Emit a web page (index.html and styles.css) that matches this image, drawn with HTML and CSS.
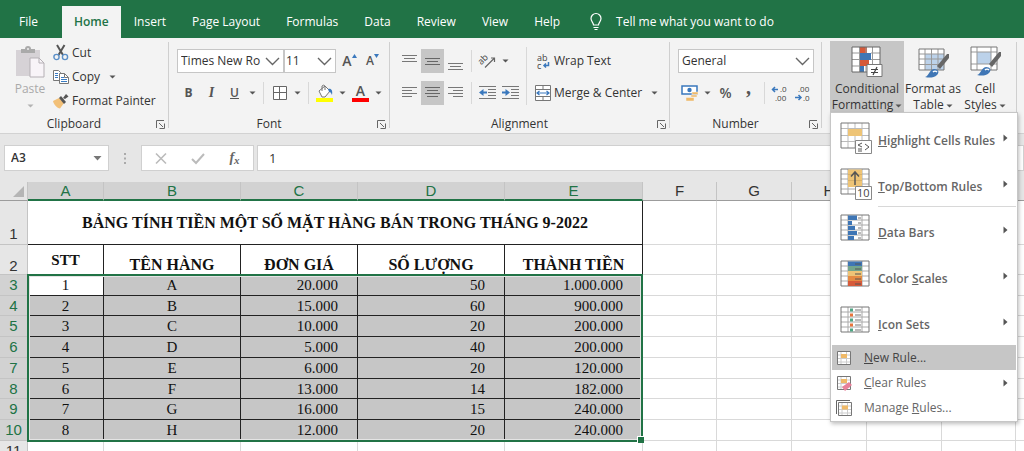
FILE: index.html
```html
<!DOCTYPE html>
<html lang="vi">
<head>
<meta charset="utf-8">
<title>Excel</title>
<link rel="stylesheet" href="styles.css">
</head>
<body>
<svg class="defs" aria-hidden="true">
  <symbol id="tri" viewBox="0 0 7 4"><path d="M0.5 0.500h6L3.500 3.500z" fill="#555"/></symbol>
  <symbol id="chev" viewBox="0 0 15 9"><path d="M1 1l6.500 6.500L14 1" fill="none" stroke="#666" stroke-width="1.400"/></symbol>
  <symbol id="launch" viewBox="0 0 9 9"><path d="M0.500 8V0.500H8M3 3l4 4M8.500 3.500v5h-5" fill="none" stroke="#666"/></symbol>
  <symbol id="sub" viewBox="0 0 5 8"><path d="M0.500 0.500v7L4.500 4z" fill="#555"/></symbol>
  <symbol id="grid" viewBox="0 0 30 30"><path d="M1 1h28v25H1z" fill="#fff"/><path d="M1 6h28M1 11h28M1 16h28M1 21h28M8 1v25M22 1v25" stroke="#aaa"/><path d="M1 1h28v25H1z" fill="none" stroke="#777"/></symbol>
</svg>

<nav class="tabs">
  <button class="tab tab-file">File</button>
  <button class="tab active">Home</button>
  <button class="tab">Insert</button>
  <button class="tab">Page Layout</button>
  <button class="tab">Formulas</button>
  <button class="tab">Data</button>
  <button class="tab">Review</button>
  <button class="tab">View</button>
  <button class="tab">Help</button>
  <button class="tab tell">
    <svg width="12" height="18" viewBox="0 0 12 18"><path d="M3.500 12C3.500 9.500 1 8.500 1 5.500a5 5 0 0 1 10 0c0 3-2.500 4-2.500 6.500zM3.500 14.500h5M4.500 16.500h3" fill="none" stroke="#fff" stroke-width="1.200"/></svg>
    Tell me what you want to do</button>
</nav>

<div class="ribbon">
  <section class="group clipboard">
    <div class="body">
      <button class="paste" disabled>
        <svg width="31" height="32" viewBox="0 0 31 32"><path d="M1 4h24v26H1z" fill="#d6d2d6"/><path d="M6 7V3h4a3 3 0 0 1 6 0h4v4z" fill="#aaa"/><circle cx="13" cy="3" r="1" fill="#eee"/><path d="M15 12h9l5 5v14H15z" fill="#f8f4f8" stroke="#b5b0b5"/><path d="M24 12v5h5" fill="none" stroke="#b5b0b5"/></svg>
        <span>Paste</span>
        <svg width="7" height="4" class="faint"><use href="#tri"/></svg>
      </button>
      <div class="clip-list">
        <button class="cmd"><svg width="16" height="16" viewBox="0 0 16 16"><path d="M4 0l6 10M11.500 0l-6 10" stroke="#555" stroke-width="2" fill="none"/><circle cx="3.500" cy="12" r="2.600" fill="none" stroke="#5b8fc7" stroke-width="1.400"/><circle cx="12" cy="12" r="2.600" fill="none" stroke="#5b8fc7" stroke-width="1.400"/></svg>Cut</button>
        <button class="cmd"><svg width="16" height="16" viewBox="0 0 16 16"><path d="M0.500 1.500h5l2 2v8h-7z" fill="#fff" stroke="#777"/><path d="M2 4.500h3M2 6.500h3M2 8.500h3" stroke="#3a7cc3"/><path d="M6.500 4.500h5l4 4v6h-9z" fill="#fff" stroke="#777"/><path d="M11.500 4.500v4h4" fill="none" stroke="#777"/><path d="M8 8.500h3M8 10.500h6M8 12.500h6" stroke="#3a7cc3"/></svg>Copy<svg class="after" width="7" height="4"><use href="#tri"/></svg></button>
        <button class="cmd"><svg width="16" height="16" viewBox="0 0 16 16"><path d="M0 8l6-3 5 5-4 5.500C4 15 1 12 0 8z" fill="#f2c078"/><path d="M6 5l2-2 5 6-2 2z" fill="#555"/><path d="M10 5l3-4 2.500 2.500L12 6z" fill="#555"/></svg>Format Painter</button>
      </div>
    </div>
    <footer><span>Clipboard</span><button class="launch" aria-label="Clipboard options"><svg width="9" height="9"><use href="#launch"/></svg></button></footer>
  </section>

  <section class="group font">
    <div class="body rows">
      <div class="row">
        <label class="combo combo-font"><select aria-label="Font"><option>Times New Ro</option></select><svg width="15" height="9"><use href="#chev"/></svg></label>
        <label class="combo combo-size"><select aria-label="Font size"><option>11</option></select><svg width="15" height="9"><use href="#chev"/></svg></label>
        <button class="tool grow" aria-label="Increase font size"><span class="glyph-a">A</span><svg width="5" height="4" viewBox="0 0 5 4"><path d="M0 4L2.500 0 5 4z" fill="#3a78bd"/></svg></button>
        <button class="tool grow" aria-label="Decrease font size"><span class="glyph-a small">A</span><svg width="5" height="4" viewBox="0 0 5 4"><path d="M0 0l2.500 4L5 0z" fill="#3a78bd"/></svg></button>
      </div>
      <div class="row">
        <button class="tool"><b>B</b></button>
        <button class="tool"><i>I</i></button>
        <button class="tool"><u>U</u></button>
        <button class="arrow" aria-label="Underline styles"><svg width="7" height="4"><use href="#tri"/></svg></button>
        <span class="sep"></span>
        <button class="tool" aria-label="Borders"><svg width="14" height="14" viewBox="0 0 14 14"><path d="M0.500 0.500h13v13H0.500zM6.500 0v14M0 6.500h14" fill="#fff" stroke="#666"/></svg></button>
        <button class="arrow" aria-label="Border styles"><svg width="7" height="4"><use href="#tri"/></svg></button>
        <span class="sep"></span>
        <button class="tool" aria-label="Fill color"><svg width="17" height="18" viewBox="0 0 17 18"><path d="M3 7l6-5 5 5-5 6H6z" fill="#fff" stroke="#777"/><path d="M6 7V2a2 2 0 0 1 3 0v4" fill="none" stroke="#777"/><path d="M12 5c3-1 5 1 4 6-1-2-1-3-3-3z" fill="#3a78bd"/><path d="M0 14h17v4H0z" fill="#ff0"/></svg></button>
        <button class="arrow" aria-label="Fill colors"><svg width="7" height="4"><use href="#tri"/></svg></button>
        <button class="tool fontcolor">A</button>
        <button class="arrow" aria-label="Font colors"><svg width="7" height="4"><use href="#tri"/></svg></button>
      </div>
    </div>
    <footer><span>Font</span><button class="launch" aria-label="Font options"><svg width="9" height="9"><use href="#launch"/></svg></button></footer>
  </section>

  <section class="group alignment">
    <div class="body">
      <div class="rows">
        <div class="row">
          <button class="tool" aria-label="Top align"><svg width="15" height="20" viewBox="0 0 15 20"><path d="M0 4.500h15M2 7.500h11M0 10.500h15" stroke="#777"/></svg></button>
          <button class="tool on" aria-label="Middle align"><svg width="15" height="20" viewBox="0 0 15 20"><path d="M0 7.500h15M2 10.500h11M0 13.500h15" stroke="#666"/></svg></button>
          <button class="tool" aria-label="Bottom align"><svg width="15" height="20" viewBox="0 0 15 20"><path d="M0 12.500h15M2 15.500h11M0 18.500h15" stroke="#777"/></svg></button>
          <span class="sep"></span>
          <button class="tool" aria-label="Orientation"><svg width="17" height="16" viewBox="0 0 17 16"><text x="0" y="9" class="ab" transform="rotate(-45 5 8)">ab</text><path d="M6 14.500L15 5.500M15.500 9V5H12" fill="none" stroke="#666" stroke-width="1.200"/></svg></button>
          <button class="arrow" aria-label="Orientations"><svg width="7" height="4"><use href="#tri"/></svg></button>
        </div>
        <div class="row">
          <button class="tool" aria-label="Align left"><svg width="15" height="12" viewBox="0 0 15 12"><path d="M0 .5h15M0 3.500h10M0 6.500h15M0 9.500h10" stroke="#777"/></svg></button>
          <button class="tool on" aria-label="Center"><svg width="15" height="12" viewBox="0 0 15 12"><path d="M0 .5h15M2 3.500h11M0 6.500h15M2 9.500h11" stroke="#666"/></svg></button>
          <button class="tool" aria-label="Align right"><svg width="15" height="12" viewBox="0 0 15 12"><path d="M0 .5h15M5 3.500h10M0 6.500h15M5 9.500h10" stroke="#777"/></svg></button>
          <span class="sep"></span>
          <button class="tool" aria-label="Decrease indent"><svg width="17" height="14" viewBox="0 0 17 14"><path d="M0 .5h17M9 3.500h8M9 6.500h8M9 9.500h8M0 12.500h17" stroke="#777"/><path d="M0 6.500L4.500 3v2.500H8v2H4.500V10z" fill="#3a78bd"/></svg></button>
          <button class="tool" aria-label="Increase indent"><svg width="17" height="14" viewBox="0 0 17 14"><path d="M0 .5h17M9 3.500h8M9 6.500h8M9 9.500h8M0 12.500h17" stroke="#777"/><path d="M8 6.500L3.500 3v2.500H0v2h3.500V10z" fill="#3a78bd"/></svg></button>
        </div>
      </div>
      <span class="sep tall"></span>
      <div class="rows">
        <button class="cmd wide"><svg width="16" height="17" viewBox="0 0 16 17"><text x="2" y="8" class="ab">ab</text><text x="2" y="16" class="ab">c</text><path d="M13.500 9v3.500H9.500M11 10.500l-2 2 2 2" fill="none" stroke="#3a78bd" stroke-width="1.500"/></svg>Wrap Text</button>
        <button class="cmd wide"><svg width="16" height="16" viewBox="0 0 16 16"><path d="M.5 .5h15v15H.5zM0 4.500h16M0 11.500h16M8 0v4M8 12v4" fill="#fff" stroke="#777"/><path d="M2 8h12M4.500 6L2 8l2.500 2M11.500 6L14 8l-2.500 2" fill="none" stroke="#3a78bd" stroke-width="1.200"/></svg>Merge &amp; Center<svg class="after" width="7" height="4"><use href="#tri"/></svg></button>
      </div>
    </div>
    <footer><span>Alignment</span><button class="launch" aria-label="Alignment options"><svg width="9" height="9"><use href="#launch"/></svg></button></footer>
  </section>

  <section class="group number">
    <div class="body rows">
      <div class="row">
        <label class="combo combo-num"><select aria-label="Number format"><option>General</option></select><svg width="15" height="9"><use href="#chev"/></svg></label>
      </div>
      <div class="row">
        <button class="tool" aria-label="Accounting format"><svg width="18" height="17" viewBox="0 0 18 17"><path d="M1 1h15v8H1z" fill="#fff" stroke="#3a78bd" stroke-width="1.500"/><circle cx="8.500" cy="5" r="2.200" fill="#3a78bd"/><path d="M11 7h6v2.500h-6zM10 10h6v2h-6zM5 12.500h8V16H5z" fill="#efb968" stroke="#f3f3f3" stroke-width=".5"/></svg></button>
        <button class="arrow" aria-label="Accounting formats"><svg width="7" height="4"><use href="#tri"/></svg></button>
        <button class="tool pct">%</button>
        <button class="tool comma">,</button>
        <span class="sep"></span>
        <button class="tool" aria-label="Increase decimal"><svg width="17" height="16" viewBox="0 0 17 16"><path d="M0 4.500h6M3 2L.5 4.500 3 7" fill="none" stroke="#3a78bd" stroke-width="1.500"/><text x="8" y="7" class="dec">.0</text><text x="3" y="16" class="dec">.00</text></svg></button>
        <button class="tool" aria-label="Decrease decimal"><svg width="17" height="16" viewBox="0 0 17 16"><text x="3" y="7" class="dec">.00</text><path d="M0 12.500h6M3.500 10L6 12.500 3.500 15" fill="none" stroke="#3a78bd" stroke-width="1.500"/><text x="8" y="16" class="dec">.0</text></svg></button>
      </div>
    </div>
    <footer><span>Number</span><button class="launch" aria-label="Number options"><svg width="9" height="9"><use href="#launch"/></svg></button></footer>
  </section>

  <section class="group styles">
    <div class="cf">
      <button class="big on">
        <svg width="33" height="32" viewBox="0 0 33 32"><path d="M1 1h28v25H1z" fill="#fff"/><path d="M9 1h7v6H9zM9 14h9v6H9z" fill="#d65a3a"/><path d="M9 7h11v7H9zM9 20h4v6H9z" fill="#3f76b5"/><path d="M1 7h8M20 7h9M1 13.500h8M20 13.500h9M1 20h8M18 20h11M8.500 1v25M21.500 1v25M15 1v6M15 20v6" stroke="#999"/><path d="M1 1h28v25H1z" fill="none" stroke="#666"/><path d="M16 18.500h15v12H16z" fill="#fff" stroke="#777"/><path d="M20 23.500h7M20 26.500h7M26 21l-4 8" stroke="#444" stroke-width="1.200"/></svg>
        <span>Conditional<br>Formatting<svg width="7" height="4"><use href="#tri"/></svg></span>
      </button>
      <div class="menu" role="menu">
        <button class="item large" role="menuitem"><svg width="32" height="32" viewBox="0 0 32 32"><path d="M1 1h28v25H1z" fill="#fff"/><path d="M1 6.500h28M1 13.500h28M1 19.500h28M8 1v25M15 1v25M22 1v25" stroke="#bbb"/><path d="M1 1h28v25H1z" fill="none" stroke="#777"/><path d="M8 7h14v7H8z" fill="#eec476"/><path d="M15.500 18.500h16v13h-16z" fill="#fff" stroke="#888"/><path d="M22 21l-4 2 4 2M18 27h4M18 29h4M25 22l4 3-4 3" fill="none" stroke="#555"/></svg><span><u>H</u>ighlight Cells Rules</span><svg class="sub" width="5" height="8"><use href="#sub"/></svg></button>
        <button class="item large" role="menuitem"><svg width="32" height="32" viewBox="0 0 32 32"><use href="#grid" width="30" height="30"/><path d="M8 1.500h14V19H8z" fill="#eec476"/><path d="M8 6.500h14M8 12.500h14" stroke="#d8b26a"/><path d="M15 17V5M11 8.500L15 4l4 4.500" fill="none" stroke="#555" stroke-width="1.500"/><path d="M15.500 18.500h16v13h-16z" fill="#fff" stroke="#888"/><text x="17" y="29" class="ten">10</text></svg><span><u>T</u>op/Bottom Rules</span><svg class="sub" width="5" height="8"><use href="#sub"/></svg></button>
        <hr>
        <button class="item large" role="menuitem"><svg width="32" height="32" viewBox="0 0 32 32"><use href="#grid" width="30" height="30"/><path d="M8 1.500h9V6H8zM8 7h4v4H8zM8 12h7v4H8zM8 17h9v4H8zM8 22h6v4H8z" fill="#3f76b5"/><path d="M18 4h3M18 9h3M18 14h3M18 19h3M18 24h3" stroke="#777"/></svg><span><u>D</u>ata Bars</span><svg class="sub" width="5" height="8"><use href="#sub"/></svg></button>
        <button class="item large" role="menuitem"><svg width="32" height="32" viewBox="0 0 32 32"><use href="#grid" width="30" height="30"/><path d="M8 1.500h14V6H8z" fill="#3f76b5"/><path d="M8 6h14v5H8z" fill="#73a58c"/><path d="M8 11h14v5H8z" fill="#eec476"/><path d="M8 16h14v5H8z" fill="#e58b43"/><path d="M8 21h14v5H8z" fill="#d65a3a"/><path d="M15 4h6M15 9h6M15 14h6M15 19h6M15 24h6" stroke="#555"/></svg><span>Color <u>S</u>cales</span><svg class="sub" width="5" height="8"><use href="#sub"/></svg></button>
        <button class="item large" role="menuitem"><svg width="32" height="32" viewBox="0 0 32 32"><use href="#grid" width="30" height="30"/><path d="M10 2.500h3v3h-3zM10 12.500h3v3h-3zM10 22.500h3v3h-3z" fill="#4fa583"/><path d="M10 7.500h3v3h-3zM10 17.500h3v3h-3z" fill="#e8743b"/><path d="M15 4h6M15 9h6M15 14h6M15 19h6M15 24h6" stroke="#777"/></svg><span><u>I</u>con Sets</span><svg class="sub" width="5" height="8"><use href="#sub"/></svg></button>
        <button class="item hover" role="menuitem"><svg width="16" height="16" viewBox="0 0 16 16"><path d="M1.500 1.500h13v13h-13z" fill="#fff" stroke="#777"/><path d="M2 5h12M2 8.500h12M2 12h12M5 2v12M10.500 2v12" stroke="#ccc"/><path d="M5 4h6v4H5z" fill="#efb968"/></svg><span><u>N</u>ew Rule...</span></button>
        <button class="item" role="menuitem"><svg width="16" height="16" viewBox="0 0 16 16"><path d="M1.500 1.500h13v13h-13z" fill="#fff" stroke="#777"/><path d="M2 5h12M2 8.500h12M2 12h12M5 2v12M10.500 2v12" stroke="#ccc"/><path d="M5 4h6v4H5z" fill="#efb968"/><path d="M6 12l7-5 3 3-7 6z" fill="#e8819a"/></svg><span><u>C</u>lear Rules</span><svg class="sub" width="5" height="8"><use href="#sub"/></svg></button>
        <button class="item" role="menuitem"><svg width="16" height="16" viewBox="0 0 16 16"><path d="M.5 14V.5H14" fill="none" stroke="#666"/><path d="M2.500 2.500h13v13h-13z" fill="#fff" stroke="#777"/><path d="M3 6h12M3 9.500h12M3 13h12M6 3v12M11.500 3v12" stroke="#ccc"/><path d="M6 5.500h6v4H6z" fill="#efb968"/></svg><span>Manage <u>R</u>ules...</span></button>
      </div>
    </div>
    <button class="big">
      <svg width="33" height="32" viewBox="0 0 33 32"><path d="M2 3h25v21H2z" fill="#fff"/><path d="M8 8h19v16H8z" fill="#bcd2ea"/><path d="M2 8h25M2 13h25M2 18.500h25M8 3v21M14.500 3v21M21 3v21" stroke="#999"/><path d="M2 3h25v21H2z" fill="none" stroke="#777"/><path d="M20 20L30 8l2 0v4L23 23z" fill="#666"/><path d="M8 31c4-1 4-7 9-8 4 0 6 3 3 6-3 3-8 3-12 2z" fill="#3f76b5"/><path d="M16 26c1-1 3-1 4 0" stroke="#fff" stroke-width="1.500" fill="none"/></svg>
      <span>Format as<br>Table<svg width="7" height="4"><use href="#tri"/></svg></span>
    </button>
    <button class="big">
      <svg width="33" height="32" viewBox="0 0 33 32"><path d="M2 1h26v23H2z" fill="#fff"/><path d="M8 6h14v12H8z" fill="#bcd2ea"/><path d="M2 6h26M2 18h26M8 1v23M22 1v23" stroke="#999"/><path d="M2 1h26v23H2z" fill="none" stroke="#777"/><path d="M20 18L30 6l2 0v4L23 21z" fill="#666"/><path d="M8 29c4-1 4-7 9-8 4 0 6 3 3 6-3 3-8 3-12 2z" fill="#3f76b5"/><path d="M16 24c1-1 3-1 4 0" stroke="#fff" stroke-width="1.500" fill="none"/></svg>
      <span>Cell<br>Styles<svg width="7" height="4"><use href="#tri"/></svg></span>
    </button>
  </section>
</div>

<div class="formula">
  <label class="namebox"><input value="A3" aria-label="Name box"><svg width="9" height="5" viewBox="0 0 9 5"><path d="M.5 0h8l-4 4.500z" fill="#777"/></svg></label>
  <svg class="dots" width="3" height="13" viewBox="0 0 3 13"><path d="M0 1h2v2H0zM0 5.500h2v2H0zM0 10h2v2H0z" fill="#aaa"/></svg>
  <div class="fx">
    <button aria-label="Cancel"><svg width="12" height="11" viewBox="0 0 12 11"><path d="M1 .5l10 10M11 .5l-10 10" stroke="#bbb" stroke-width="1.600"/></svg></button>
    <button aria-label="Enter"><svg width="14" height="11" viewBox="0 0 14 11"><path d="M1 6l4 4 8-9" fill="none" stroke="#bbb" stroke-width="2"/></svg></button>
    <button class="fn">f<small>x</small></button>
  </div>
  <input class="value" value="1" aria-label="Formula">
</div>

<main class="sheet">
  <table>
    <colgroup><col class="c-head"><col class="c-a"><col class="c-b"><col class="c-c"><col class="c-d"><col class="c-e"><col class="c-f"><col class="c-n"><col class="c-n"><col class="c-n"><col class="c-f"><col></colgroup>
    <thead>
      <tr><th class="corner"><svg width="11" height="11" viewBox="0 0 11 11"><path d="M11 0v11H0z" fill="#b5b5b5"/></svg></th><th class="sel">A</th><th class="sel">B</th><th class="sel">C</th><th class="sel">D</th><th class="sel">E</th><th>F</th><th>G</th><th>H</th><th></th><th></th><th></th></tr>
    </thead>
    <tbody>
      <tr class="r1"><th>1</th><td colspan="5" class="title ink">BẢNG TÍNH TIỀN MỘT SỐ MẶT HÀNG BÁN TRONG THÁNG 9-2022</td><td></td><td></td><td></td><td></td><td></td><td></td></tr>
      <tr class="r2"><th>2</th><td class="ink h mid">STT</td><td class="ink h">TÊN HÀNG</td><td class="ink h">ĐƠN GIÁ</td><td class="ink h">SỐ LƯỢNG</td><td class="ink h">THÀNH TIỀN</td><td></td><td></td><td></td><td></td><td></td><td></td></tr>
      <tr class="data"><th>3</th><td class="cur">1</td><td>A</td><td>20.000</td><td>50</td><td>1.000.000</td><td></td><td></td><td></td><td></td><td></td><td></td></tr>
      <tr class="data"><th>4</th><td>2</td><td>B</td><td>15.000</td><td>60</td><td>900.000</td><td></td><td></td><td></td><td></td><td></td><td></td></tr>
      <tr class="data"><th>5</th><td>3</td><td>C</td><td>10.000</td><td>20</td><td>200.000</td><td></td><td></td><td></td><td></td><td></td><td></td></tr>
      <tr class="data"><th>6</th><td>4</td><td>D</td><td>5.000</td><td>40</td><td>200.000</td><td></td><td></td><td></td><td></td><td></td><td></td></tr>
      <tr class="data"><th>7</th><td>5</td><td>E</td><td>6.000</td><td>20</td><td>120.000</td><td></td><td></td><td></td><td></td><td></td><td></td></tr>
      <tr class="data"><th>8</th><td>6</td><td>F</td><td>13.000</td><td>14</td><td>182.000</td><td></td><td></td><td></td><td></td><td></td><td></td></tr>
      <tr class="data"><th>9</th><td>7</td><td>G</td><td>16.000</td><td>15</td><td>240.000</td><td></td><td></td><td></td><td></td><td></td><td></td></tr>
      <tr class="data"><th>10</th><td>8</td><td>H</td><td>12.000</td><td>20</td><td>240.000</td><td></td><td></td><td></td><td></td><td></td><td></td></tr>
      <tr class="next"><th>11</th><td></td><td></td><td></td><td></td><td></td><td></td><td></td><td></td><td></td><td></td><td></td></tr>
    </tbody>
  </table>
  <div class="selection"></div>
</main>
</body>
</html>
```

FILE: styles.css
```css
* { box-sizing: border-box; }
body {
  margin: 0;
  height: 100vh;
  overflow: hidden;
  display: flex;
  flex-direction: column;
  background: #fff;
  color: #333;
  font: 12px/16px "Open Sans", "Noto Sans", sans-serif;
}
button, input, select { font: inherit; color: inherit; border: 0; padding: 0; margin: 0; background: none; border-radius: 0; outline: 0; }
svg { display: block; flex: none; overflow: visible; }
.defs { position: absolute; width: 0; height: 0; }

/* Tabs */
.tabs { display: flex; background: #217346; padding-top: 6px; height: 38px; flex: none; }
.tab { color: #fff; padding: 0 13px; white-space: nowrap; }
.tab-file { padding: 0 24px 0 19px; }
.tab.active { background: #f3f3f3; color: #217346; font-weight: 600; padding: 0 12px; }
.tell { display: flex; align-items: center; gap: 14px; padding-left: 17px; }

/* Ribbon */
.ribbon { display: flex; flex: none; height: 96px; padding-top: 3px; background: #f3f3f3; border-bottom: 1px solid #d2d2d2; }
.group { display: flex; flex-direction: column; position: relative; flex: none; }
.group::after { content: ""; position: absolute; right: 0; top: 1px; bottom: 5px; width: 1px; background: #cfcfcf; }
.body { display: flex; height: 74px; }
.group footer { display: flex; align-items: center; height: 18px; padding-right: 4px; }
.group footer span { flex: 1; text-align: center; padding-right: 8px; }
.clipboard { width: 169px; }
.font { width: 221px; }
.alignment { width: 280px; }
.number { width: 152px; }
.styles { width: 195px; flex-direction: row; padding-left: 8px; }
.rows { display: flex; flex-direction: column; gap: 8px; padding: 8px 0 0 8px; }
.row { display: flex; align-items: center; height: 24px; }
.tool { width: 23px; height: 24px; display: flex; align-items: center; justify-content: center; color: #555; }
.tool.on { background: #c6c6c6; }
.arrow { width: 13px; height: 24px; display: flex; align-items: center; justify-content: center; }
.sep { width: 1px; height: 22px; background: #d8d8d8; margin: 0 4px; }
.sep.tall { height: 58px; margin: 6px 0 0 4px; }

.paste { display: flex; flex-direction: column; align-items: center; gap: 3px; width: 48px; padding: 5px 0 0 12px; color: #aaa; margin-right: 2px; }
.faint { opacity: .4; margin-top: 4px; }
.clip-list { display: flex; flex-direction: column; }
.clip-list .cmd { height: 24px; }
.cmd { display: flex; align-items: center; gap: 3px; padding-left: 3px; white-space: nowrap; }
.cmd.wide { height: 24px; padding: 0; gap: 3px; }
.after { margin-left: 6px; }

.combo { position: relative; display: flex; background: #fff; border: 1px solid #c6c6c6; height: 24px; }
.combo select { appearance: none; width: 100%; padding-left: 3px; }
.combo svg { position: absolute; right: 3px; top: 7px; }
.combo-font { width: 107px; }
.combo-size { width: 52px; margin-right: 2px; }
.combo-size select { padding-left: 1px; }
.combo-num { width: 136px; }
.grow svg { margin-bottom: 11px; }
.glyph-a { font-size: 14px; font-weight: 600; }
.glyph-a.small { font-size: 12px; }
.tool b { font-weight: 700; }
.tool i { font-family: "Liberation Serif", serif; font-weight: 700; font-size: 14px; }
.tool u { font-weight: 600; }
.fontcolor { border-bottom: 4px solid #f00; height: 18px; width: 17px; margin: 0 3px; font-size: 14px; font-weight: 600; line-height: 14px; }
.pct { font-size: 14px; font-weight: 600; }
.comma { font: 700 20px/10px "Liberation Serif", serif; padding-bottom: 12px; }
.ab { font: 9px "Open Sans", sans-serif; fill: #444; }
.dec { font: 8px "Open Sans", sans-serif; fill: #444; }
.ten { font: 11px "Open Sans", sans-serif; fill: #444; }

.big { display: flex; flex-direction: column; align-items: center; gap: 3px; height: 72px; padding-top: 5px; line-height: 16px; white-space: nowrap; }
.big span svg { display: inline-block; vertical-align: middle; margin-left: 2px; }
.big.on { background: #c6c6c6; width: 74px; }
.styles > .big { width: 58px; }
.styles > .big:last-child { width: 46px; }

/* Conditional formatting menu */
.cf { position: relative; }
.menu { position: absolute; z-index: 5; top: 71px; left: 0; width: 188px; padding: 2px 1px 1px; background: #fff; border: 1px solid #c6c6c6; box-shadow: 1px 2px 4px rgba(0, 0, 0, .25); }
.item { display: flex; align-items: center; gap: 12px; width: 100%; height: 25px; padding: 0 8px 0 4px; text-align: left; color: #666; white-space: nowrap; }
.item span { flex: 1; }
.item.large { height: 46px; gap: 6px; padding-left: 8px; font-weight: 600; }
.item.large span { padding-top: 5px; }
.item.hover { background: #c6c6c6; color: #444; }
.menu hr { margin: -1px 0 0 46px; border: 0; border-top: 1px solid #d8d8d8; }

/* Formula bar */
.formula { display: flex; align-items: center; height: 48px; padding: 0 0 0 4px; background: #e6e6e6; flex: none; }
.namebox { display: flex; align-items: center; width: 105px; height: 26px; padding: 0 6px 0 6px; background: #fff; border: 1px solid #d0d0d0; }
.namebox input { flex: 1; min-width: 0; font-weight: 600; }
.dots { margin: 0 14px 0 15px; }
.fx { display: flex; width: 113px; height: 26px; background: #fff; border: 1px solid #d0d0d0; margin-right: 3px; }
.fx button { flex: 1; display: flex; align-items: center; justify-content: center; }
.fx .fn { font: italic 700 14px/18px "Liberation Serif", serif; color: #666; }
.fn small { font-size: 11px; padding-top: 4px; }
.value { flex: 1; min-width: 0; height: 26px; padding-left: 11px; background: #fff; border: 1px solid #d0d0d0; font-size: 13px; }

/* Sheet */
.sheet { position: relative; flex: 1; overflow: hidden; }
table { width: 100%; min-width: 1040px; table-layout: fixed; border-collapse: separate; border-spacing: 0; }
.c-head { width: 28px; }
.c-a { width: 76px; }
.c-b { width: 137px; }
.c-c { width: 117px; }
.c-d { width: 147px; }
.c-e { width: 138px; }
.c-f { width: 74px; }
.c-n { width: 75px; }
th, td { padding: 0; border: 0 solid #d9d9d9; border-width: 0 1px 1px 0; }
th { background: #e6e6e6; font: 15px/16px "Liberation Sans", sans-serif; border-color: #c4c4c4; color: #333; }
thead th { height: 19px; border-bottom-color: #9c9c9c; }
thead .sel { background: #d2d2d2; color: #217346; border-bottom: 2px solid #217346; }
.corner svg { margin: 0 3px 0 auto; }
td { font: 15px/18px "Liberation Serif", serif; color: #111; text-align: center; white-space: nowrap; }
.r1 th, .r1 td { height: 44px; }
.r2 th, .r2 td { height: 30px; }
.r1 th { vertical-align: bottom; padding-bottom: 2px; }
.r2 th { vertical-align: bottom; }
.ink { border-color: #222; font-size: 16px; font-weight: 700; }
.h { vertical-align: bottom; }
.h.mid { vertical-align: middle; font-size: 15px; }
.data th, .data td { height: 21px; }
.data:nth-child(4n) th, .data:nth-child(4n) td { height: 20px; }
.data th { background: #d2d2d2; color: #217346; }
.data td:nth-child(-n+6) { background: #c6c6c6; border-color: #222; }
.data td:nth-child(n+4) { text-align: right; padding-right: 19px; }
.data td.cur { background: #fff; }
.next th { height: 20px; }
.selection { position: absolute; left: 27px; top: 92px; width: 616px; height: 168px; border: 2px solid #217346; box-shadow: inset 0 0 0 1px #e4e4e4; }
.selection::after { content: ""; position: absolute; right: -3px; bottom: -3px; width: 6px; height: 6px; background: #217346; border: 1px solid #fff; border-width: 1px 0 0 1px; }
```
